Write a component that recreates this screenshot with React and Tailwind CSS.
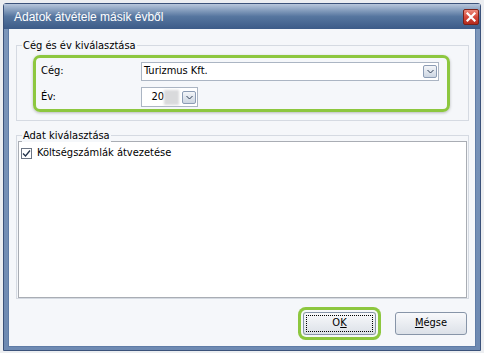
import React from 'react';

const body = { fontFamily: '"DejaVu Sans Condensed","Liberation Sans",sans-serif' };

const DropBtn = () => (
  <div className="w-[14px] h-[13px] border border-[#8d9db5] rounded-[2px] bg-gradient-to-b from-[#f4f6f9] to-[#cdd6e2] flex items-center justify-center">
    <svg width="7" height="5" viewBox="0 0 7 5">
      <polyline points="0.5,1 3.5,4 6.5,1" fill="none" stroke="#2f3f57" strokeWidth="1" />
    </svg>
  </div>
);

const App = () => {
  return (
    <div className="w-[484px] h-[353px] bg-[#eceef1] pt-[3px] pl-[3px]" style={body}>
      <div className="w-[478px] h-[348px] flex flex-col border border-[#3b527a] rounded-t-[3px] bg-gradient-to-b from-[#7d97bb] to-[#6e8ab2]">
        {/* title bar */}
        <div className="h-[25px] flex items-center justify-between pl-[10px] pr-[1px] bg-gradient-to-b from-[#b8c7dc] via-[#56769f] to-[#3c5b88]">
          <span className="text-[12px] text-white leading-none" style={{ fontFamily: '"Liberation Sans",sans-serif' }}>
            Adatok átvétele másik évből
          </span>
          <div className="w-[16px] h-[16px] border border-[#7b2118] rounded-[2px] bg-gradient-to-b from-[#ec8a7c] via-[#d4473a] to-[#b52b1d] flex items-center justify-center">
            <svg width="10" height="10" viewBox="0 0 10 10">
              <path d="M1.5 1.5 L8.5 8.5 M8.5 1.5 L1.5 8.5" stroke="white" strokeWidth="2.2" strokeLinecap="square" />
            </svg>
          </div>
        </div>

        {/* frame + client */}
        <div className="flex-1 px-[4px] pb-[3px]">
          <div className="h-full bg-[#f5f7fa] flex flex-col border-l border-r border-b border-[#5f7ca6]">
            {/* group 1 */}
            <div className="relative ml-[7px] mt-[16px] w-[453px] h-[76px] border border-[#d5dae2]">
              <span className="absolute left-[5px] -top-[7px] px-[1px] bg-[#f5f7fa] text-[11px] leading-[13px] text-black">
                Cég és év kiválasztása
              </span>
              <div className="ml-[16px] mt-[9px] w-[417px] h-[57px] border-[3px] border-[#8dc73f] rounded-[7px] shadow-[0_1px_3px_rgba(0,0,0,0.25)] text-[11px] text-black">
                <div className="flex items-center h-[19px] mt-[4px]">
                  <span className="w-[105px] pl-[5px]">Cég:</span>
                  <div className="w-[298px] h-[19px] border border-[#abb5c3] bg-white flex items-center justify-between pl-[2px] pr-[1px]">
                    <span>Turizmus Kft.</span>
                    <DropBtn />
                  </div>
                </div>
                <div className="flex items-center h-[20px] mt-[6px]">
                  <span className="w-[105px] pl-[5px]">Év:</span>
                  <div className="w-[57px] h-[20px] border border-[#abb5c3] bg-white flex items-center justify-end pr-[1px]">
                    <span>20</span>
                    <span className="w-[15px] h-[15px] bg-[#d9dadc] blur-[1px] mr-[3px]"></span>
                    <DropBtn />
                  </div>
                </div>
              </div>
            </div>

            {/* group 2 */}
            <div className="relative ml-[7px] mt-[14px] w-[453px] h-[164px] border border-[#d5dae2]">
              <span className="absolute left-[5px] -top-[7px] px-[1px] bg-[#f5f7fa] text-[11px] leading-[13px] text-black">
                Adat kiválasztása
              </span>
              <div className="mt-[5px] ml-[1px] w-[449px] h-[157px] bg-white border border-[#a9adb4]">
                <div className="flex items-center pt-[5px] pl-[2px] text-[11px] text-black gap-[5px]">
                  <div className="w-[11px] h-[11px] border border-[#6c7584] bg-white flex items-center justify-center">
                    <svg width="9" height="9" viewBox="0 0 9 9">
                      <polyline points="1,4.5 3.5,7 8,1.5" fill="none" stroke="#22324a" strokeWidth="1.3" />
                    </svg>
                  </div>
                  <span className="leading-[12px]">Költségszámlák átvezetése</span>
                </div>
              </div>
            </div>

            {/* buttons */}
            <div className="flex justify-end items-center mt-[13px] pr-[8px] gap-[19px] text-[11px] text-black">
              <button className="relative w-[73px] h-[23px] border border-[#8795a8] rounded-[3px] bg-gradient-to-b from-[#f8f9fb] to-[#dce1e8] ring-[3px] ring-[#8dc73f] ring-offset-[2px] ring-offset-[#f5f7fa]">
                <span className="absolute inset-[2px] border border-dotted border-black"></span>
                O<u>K</u>
              </button>
              <button className="w-[72px] h-[23px] border border-[#8795a8] rounded-[3px] bg-gradient-to-b from-[#f8f9fb] to-[#dce1e8]">
                <u>M</u>égse
              </button>
            </div>
          </div>
        </div>
      </div>
    </div>
  );
};

export default App;
